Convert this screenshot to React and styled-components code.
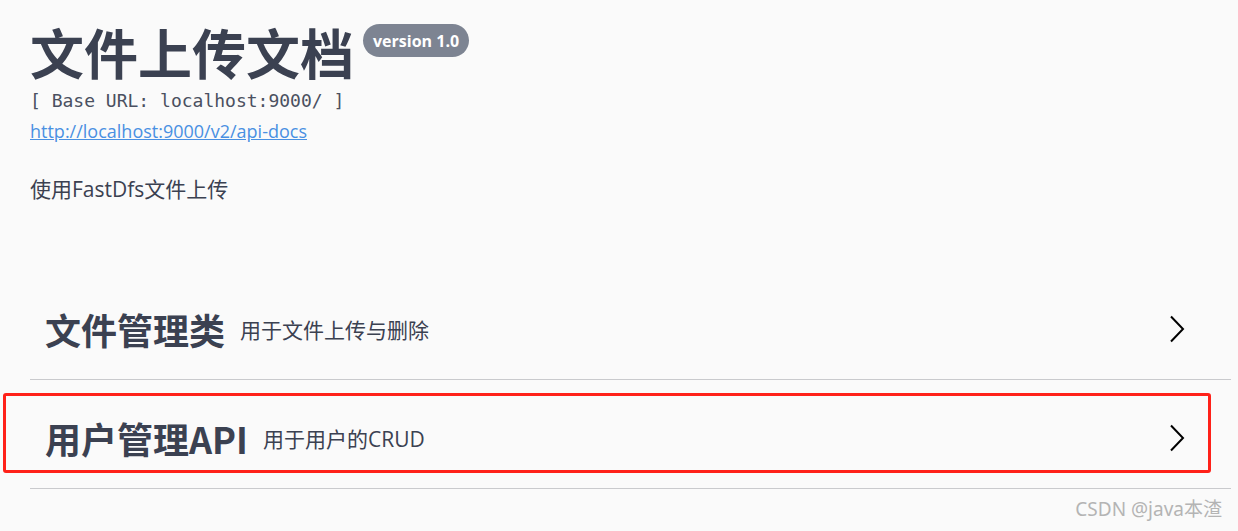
import React from "react";
import styled, { createGlobalStyle } from "styled-components";

const Global = createGlobalStyle`
  html, body { margin: 0; padding: 0; background: #fafafa; }
  body { font-family: "Open Sans", "Noto Sans CJK SC", sans-serif; color: #3b4151; }
`;

const Page = styled.div`
  position: relative;
  width: 1238px;
  height: 531px;
  box-sizing: border-box;
  padding: 22px 7px 0 30px;
  overflow: hidden;
`;

const Info = styled.section`
  display: flex;
  flex-direction: column;
  align-items: flex-start;
`;

const TitleRow = styled.div`
  display: flex;
  align-items: flex-start;
`;

const Title = styled.h2`
  margin: 0;
  font-family: "Open Sans", "Noto Sans CJK SC", sans-serif;
  font-size: 54px;
  font-weight: 700;
  line-height: 64px;
  color: #3b4151;
`;

const VersionPill = styled.span`
  display: inline-flex;
  align-items: center;
  height: 33px;
  margin: 2px 0 0 9px;
  padding: 0 10px;
  border-radius: 57px;
  background: #7d8492;
  color: #fff;
  font-family: "Open Sans", sans-serif;
  font-size: 16px;
  font-weight: 700;
`;

const BaseUrl = styled.pre`
  margin: 3px 0 0 0;
  font-family: "DejaVu Sans Mono", "Liberation Mono", monospace;
  font-size: 18px;
  line-height: 24px;
  color: #4a5060;
`;

const DocLink = styled.a`
  margin-top: 6px;
  font-size: 18px;
  line-height: 24px;
  color: #4990e2;
  text-decoration: underline;
`;

const Description = styled.p`
  margin: 32px 0 0 0;
  font-size: 21px;
  line-height: 28px;
  color: #3b4151;
`;

const Tags = styled.div`
  margin-top: 76px;
  display: flex;
  flex-direction: column;
  gap: 8px;
`;

const TagRow = styled.div`
  position: relative;
  display: flex;
  align-items: center;
  height: 100px;
  padding: 0 46px 0 15px;
  border-bottom: 1px solid #c9cacd;
`;

const TagName = styled.span`
  font-family: "Noto Sans CJK SC", "Open Sans", sans-serif;
  font-size: 36px;
  font-weight: 700;
  color: #3b4151;
`;

const TagDesc = styled.small`
  flex: 1;
  margin-left: 15px;
  font-size: 21px;
  font-weight: 400;
  color: #3b4151;
`;

const Arrow = styled.svg`
  width: 16px;
  height: 28px;
  flex: none;
`;

const Highlight = styled.div`
  position: absolute;
  top: 5px;
  left: -27px;
  width: 1208px;
  height: 80px;
  box-sizing: border-box;
  border: 3px solid #ff2119;
  border-radius: 3px;
  pointer-events: none;
`;

const Watermark = styled.div`
  position: absolute;
  right: 16px;
  bottom: 9px;
  font-family: "Noto Sans", "Noto Sans CJK SC", sans-serif;
  font-size: 19px;
  color: #b4b4b4;
`;

const Chevron = () => (
  <Arrow viewBox="0 0 16 28">
    <polyline points="2,1.5 14,14 2,26.5" fill="none" stroke="#000" strokeWidth="2" />
  </Arrow>
);

const tags = [
  { name: "文件管理类", desc: "用于文件上传与删除" },
  { name: "用户管理API", desc: "用于用户的CRUD", marked: true },
];

export default function App() {
  return (
    <>
      <Global />
      <Page>
        <Info>
          <TitleRow>
            <Title>文件上传文档</Title>
            <VersionPill>version 1.0</VersionPill>
          </TitleRow>
          <BaseUrl>[ Base URL: localhost:9000/ ]</BaseUrl>
          <DocLink href="#">http://localhost:9000/v2/api-docs</DocLink>
          <Description>使用FastDfs文件上传</Description>
        </Info>
        <Tags>
          {tags.map((t) => (
            <TagRow key={t.name}>
              <TagName>{t.name}</TagName>
              <TagDesc>{t.desc}</TagDesc>
              <Chevron />
              {t.marked && <Highlight />}
            </TagRow>
          ))}
        </Tags>
        <Watermark>CSDN @java本渣</Watermark>
      </Page>
    </>
  );
}
